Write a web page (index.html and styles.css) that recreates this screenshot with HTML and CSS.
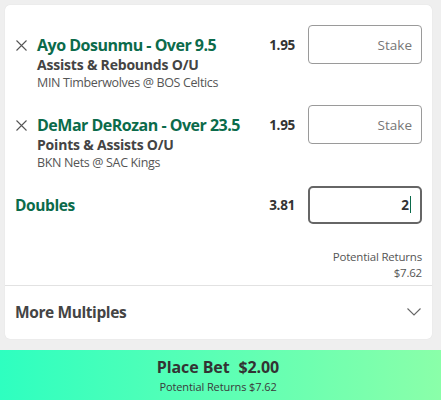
FILE: index.html
```html
<!DOCTYPE html>
<html lang="en">
<head>
  <meta charset="UTF-8" />
  <meta name="viewport" content="width=device-width, initial-scale=1.0"/>
  <title>Bet Slip</title>
  <link rel="stylesheet" href="styles.css">
</head>
<body>

  <div class="page">
    <div class="card">
      <div class="slip">

        <div class="bet">
          <span class="bet-remove">
            <svg width="11" height="11" viewBox="0 0 11 11"><path d="M0.5 0.5 L10.5 10.5 M10.5 0.5 L0.5 10.5" stroke="#555" stroke-width="1.1" fill="none"/></svg>
          </span>
          <div class="bet-info">
            <div class="bet-title">Ayo Dosunmu - Over 9.5</div>
            <div class="bet-market">Assists &amp; Rebounds O/U</div>
            <div class="bet-event">MIN Timberwolves @ BOS Celtics</div>
          </div>
          <div class="bet-price">
            <span class="odds">1.95</span>
            <div class="stake"><span class="placeholder">Stake</span></div>
          </div>
        </div>

        <div class="bet">
          <span class="bet-remove">
            <svg width="11" height="11" viewBox="0 0 11 11"><path d="M0.5 0.5 L10.5 10.5 M10.5 0.5 L0.5 10.5" stroke="#555" stroke-width="1.1" fill="none"/></svg>
          </span>
          <div class="bet-info">
            <div class="bet-title">DeMar DeRozan - Over 23.5</div>
            <div class="bet-market">Points &amp; Assists O/U</div>
            <div class="bet-event">BKN Nets @ SAC Kings</div>
          </div>
          <div class="bet-price">
            <span class="odds">1.95</span>
            <div class="stake"><span class="placeholder">Stake</span></div>
          </div>
        </div>

        <div class="multi">
          <div class="multi-name">Doubles</div>
          <div class="bet-price">
            <span class="odds">3.81</span>
            <div class="stake active"><span class="value">2</span><span class="caret"></span></div>
          </div>
        </div>

        <div class="returns">
          <div>Potential Returns</div>
          <div>$7.62</div>
        </div>
      </div>

      <div class="more">
        <span>More Multiples</span>
        <svg width="14" height="8" viewBox="0 0 14 8"><polyline points="0.5,0.5 7,7 13.5,0.5" stroke="#666" stroke-width="1.1" fill="none"/></svg>
      </div>
    </div>
  </div>

  <div class="place-bet">
    <div class="place-main"><span>Place Bet</span><span class="place-amount">$2.00</span></div>
    <div class="place-sub">Potential Returns $7.62</div>
  </div>

</body>
</html>
```

FILE: styles.css
```css
body {
  margin: 0;
  background: #efefef;
  font-family: 'Open Sans', 'Noto Sans', sans-serif;
  color: #444;
}
.page {
  padding: 5px 9px 0 5px;
}
.card {
  background: #fff;
  border-radius: 5px;
  box-shadow: 0 0 1px rgba(0,0,0,0.12);
}
.slip {
  padding: 20px 10px 4px 10px;
}
.bet {
  display: flex;
  align-items: flex-start;
  margin-bottom: 14px;
}
.bet-remove {
  width: 21px;
  padding: 15px 0 0 1px;
  line-height: 0;
}
.bet-info {
  flex: 1;
  padding-top: 10px;
}
.bet-title {
  font-size: 16px;
  font-weight: 700;
  line-height: 20px;
  letter-spacing: -0.5px;
  color: #0b6b4b;
}
.bet-market {
  margin-top: 1px;
  font-size: 14px;
  font-weight: 700;
  line-height: 18px;
  letter-spacing: -0.2px;
  color: #444;
}
.bet-event {
  font-size: 12.5px;
  line-height: 17px;
  letter-spacing: -0.35px;
  color: #555;
}
.bet-price {
  display: flex;
  align-items: center;
  gap: 13px;
  height: 39px;
}
.odds {
  font-size: 13.5px;
  font-weight: 700;
  letter-spacing: -0.3px;
  color: #333;
}
.stake {
  box-sizing: border-box;
  width: 114px;
  height: 39px;
  border: 1px solid #9a9a9a;
  border-radius: 4px;
  display: flex;
  align-items: center;
  justify-content: flex-end;
  padding-right: 9px;
  font-size: 13.5px;
  color: #777;
}
.stake.active {
  height: 38px;
  border: 2px solid #666;
  border-radius: 5px;
  padding-right: 9px;
  color: #333;
  font-weight: 700;
}
.caret {
  width: 1px;
  height: 17px;
  background: #0b6b4b;
  margin-left: 1px;
}
.multi {
  display: flex;
  align-items: center;
  margin-top: 1px;
}
.multi-name {
  flex: 1;
  font-size: 15.5px;
  font-weight: 700;
  letter-spacing: -0.4px;
  color: #0b6b4b;
}
.returns {
  margin-top: 25px;
  text-align: right;
  font-size: 11.5px;
  line-height: 16px;
  letter-spacing: -0.2px;
  color: #555;
}
.more {
  box-sizing: border-box;
  border-top: 1px solid #e2e2e2;
  height: 54px;
  display: flex;
  align-items: center;
  justify-content: space-between;
  padding: 0 11px 2px 10px;
  font-size: 15.5px;
  font-weight: 700;
  letter-spacing: -0.4px;
  color: #444;
}
.place-bet {
  margin-top: 11px;
  height: 50px;
  box-sizing: border-box;
  padding: 7px 5px 0 0;
  background: linear-gradient(90deg, #2effc0, #8affa9);
  text-align: center;
  color: #333;
}
.place-main {
  font-size: 16px;
  font-weight: 700;
  line-height: 20px;
  letter-spacing: -0.1px;
}
.place-amount {
  margin-left: 9px;
}
.place-sub {
  margin-top: 3px;
  font-size: 11px;
  line-height: 14px;
  letter-spacing: -0.1px;
  color: #3a3a3a;
}
```
